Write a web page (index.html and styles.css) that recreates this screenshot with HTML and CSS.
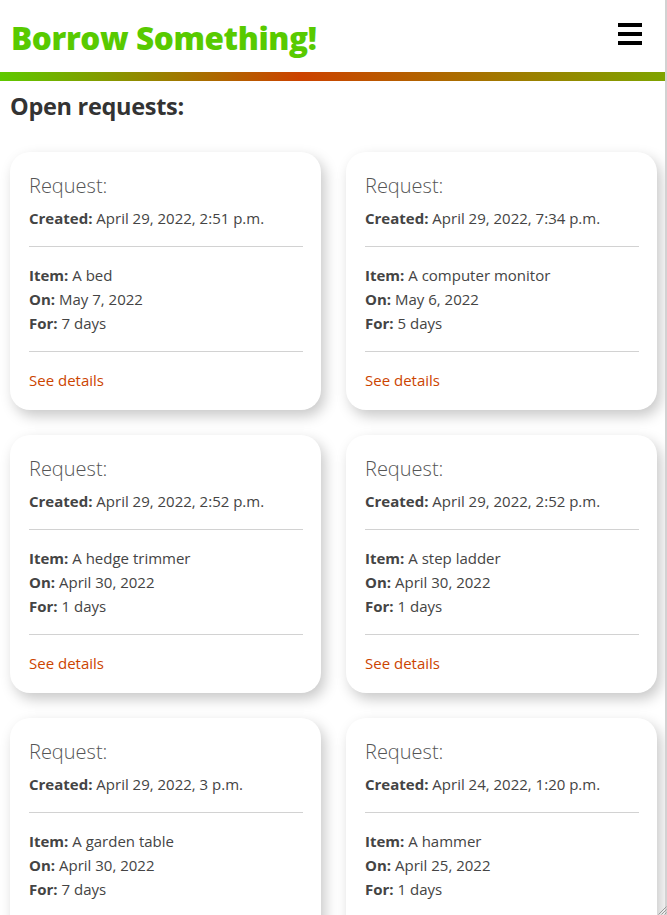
FILE: index.html
```html
<!DOCTYPE html>
<html lang="en">
<head>
<meta charset="utf-8">
<title>Borrow Something!</title>
<link rel="stylesheet" href="styles.css">
</head>
<body>
<header class="site-header">
  <h1 class="brand">Borrow Something!</h1>
  <button class="menu-btn" aria-label="Menu">
    <span class="bar"></span><span class="bar"></span><span class="bar"></span>
  </button>
</header>
<div class="accent-bar"></div>
<main class="content">
  <h2 class="page-title">Open requests:</h2>
  <div class="card-grid">
    <article class="card">
      <h3 class="card-title">Request:</h3>
      <p class="line"><b>Created:</b> April 29, 2022, 2:51 p.m.</p>
      <hr class="sep">
      <p class="line"><b>Item:</b> A bed</p>
      <p class="line"><b>On:</b> May 7, 2022</p>
      <p class="line"><b>For:</b> 7 days</p>
      <hr class="sep">
      <a class="details" href="#">See details</a>
    </article>
    <article class="card">
      <h3 class="card-title">Request:</h3>
      <p class="line"><b>Created:</b> April 29, 2022, 7:34 p.m.</p>
      <hr class="sep">
      <p class="line"><b>Item:</b> A computer monitor</p>
      <p class="line"><b>On:</b> May 6, 2022</p>
      <p class="line"><b>For:</b> 5 days</p>
      <hr class="sep">
      <a class="details" href="#">See details</a>
    </article>
    <article class="card">
      <h3 class="card-title">Request:</h3>
      <p class="line"><b>Created:</b> April 29, 2022, 2:52 p.m.</p>
      <hr class="sep">
      <p class="line"><b>Item:</b> A hedge trimmer</p>
      <p class="line"><b>On:</b> April 30, 2022</p>
      <p class="line"><b>For:</b> 1 days</p>
      <hr class="sep">
      <a class="details" href="#">See details</a>
    </article>
    <article class="card">
      <h3 class="card-title">Request:</h3>
      <p class="line"><b>Created:</b> April 29, 2022, 2:52 p.m.</p>
      <hr class="sep">
      <p class="line"><b>Item:</b> A step ladder</p>
      <p class="line"><b>On:</b> April 30, 2022</p>
      <p class="line"><b>For:</b> 1 days</p>
      <hr class="sep">
      <a class="details" href="#">See details</a>
    </article>
    <article class="card">
      <h3 class="card-title">Request:</h3>
      <p class="line"><b>Created:</b> April 29, 2022, 3 p.m.</p>
      <hr class="sep">
      <p class="line"><b>Item:</b> A garden table</p>
      <p class="line"><b>On:</b> April 30, 2022</p>
      <p class="line"><b>For:</b> 7 days</p>
      <hr class="sep">
      <a class="details" href="#">See details</a>
    </article>
    <article class="card">
      <h3 class="card-title">Request:</h3>
      <p class="line"><b>Created:</b> April 24, 2022, 1:20 p.m.</p>
      <hr class="sep">
      <p class="line"><b>Item:</b> A hammer</p>
      <p class="line"><b>On:</b> April 25, 2022</p>
      <p class="line"><b>For:</b> 1 days</p>
      <hr class="sep">
      <a class="details" href="#">See details</a>
    </article>
  </div>
</main>
<div class="frame-edge"></div>
<svg class="grip" width="10" height="10" viewBox="0 0 10 10">
  <path d="M9.5 1.5 L1.5 9.5 M9.5 4.5 L4.5 9.5 M9.5 7.5 L7.5 9.5" stroke="#9a9a9a" stroke-width="1" fill="none"/>
</svg>
</body>
</html>
```

FILE: styles.css
```css
html { scrollbar-width: none; }
html::-webkit-scrollbar { display: none; }
body {
  margin: 0;
  background: #fff;
  font-family: "Open Sans", "Noto Sans", sans-serif;
  color: #444;
  overflow: hidden;
  height: 915px;
}
.site-header {
  height: 72px;
  display: flex;
  align-items: center;
  justify-content: space-between;
  padding: 0 25px 0 11px;
}
.brand {
  margin: 0;
  font-family: "Open Sans", sans-serif;
  font-weight: 800;
  font-size: 31.5px;
  color: #58ca00;
  letter-spacing: -0.4px;
  line-height: 1;
  padding-top: 3px;
}
.menu-btn {
  border: 0;
  background: none;
  padding: 0;
  width: 24px;
  display: flex;
  flex-direction: column;
  gap: 5px;
  margin-top: -4px;
}
.bar {
  display: block;
  height: 4px;
  width: 24px;
  background: #000;
}
.accent-bar {
  height: 9px;
  background: linear-gradient(90deg, #5ec900 0%, #cc4200 45%, #7ea400 100%);
}
.content {
  padding: 0 10px;
}
.page-title {
  margin: 10px 0 31px 0;
  font-size: 23.5px;
  font-weight: 700;
  color: #333;
  line-height: 30px;
  letter-spacing: -0.3px;
}
.card-grid {
  display: grid;
  grid-template-columns: 1fr 1fr;
  column-gap: 25px;
  row-gap: 25px;
}
.card {
  background: #fff;
  border-radius: 20px;
  padding: 22px 18px 18px 19px;
  box-shadow: 4px 6px 14px rgba(0, 0, 0, 0.22);
}
.card-title {
  margin: 0 0 8px 0;
  font-weight: 300;
  font-size: 20px;
  line-height: 24px;
  color: #555;
}
.line {
  margin: 0;
  font-size: 15px;
  line-height: 24px;
  color: #444;
}
.line b { font-weight: 700; color: #444; }
.sep {
  border: 0;
  border-top: 1px solid #d2d2d2;
  margin: 16px 0;
}
.details {
  display: block;
  font-size: 15px;
  line-height: 24px;
  color: #cc4400;
  text-decoration: none;
}
.frame-edge {
  position: fixed;
  top: 0;
  right: 0;
  width: 2px;
  height: 100%;
  background: #d2d2d2;
}
.grip {
  position: fixed;
  right: 0;
  bottom: 0;
}
```
